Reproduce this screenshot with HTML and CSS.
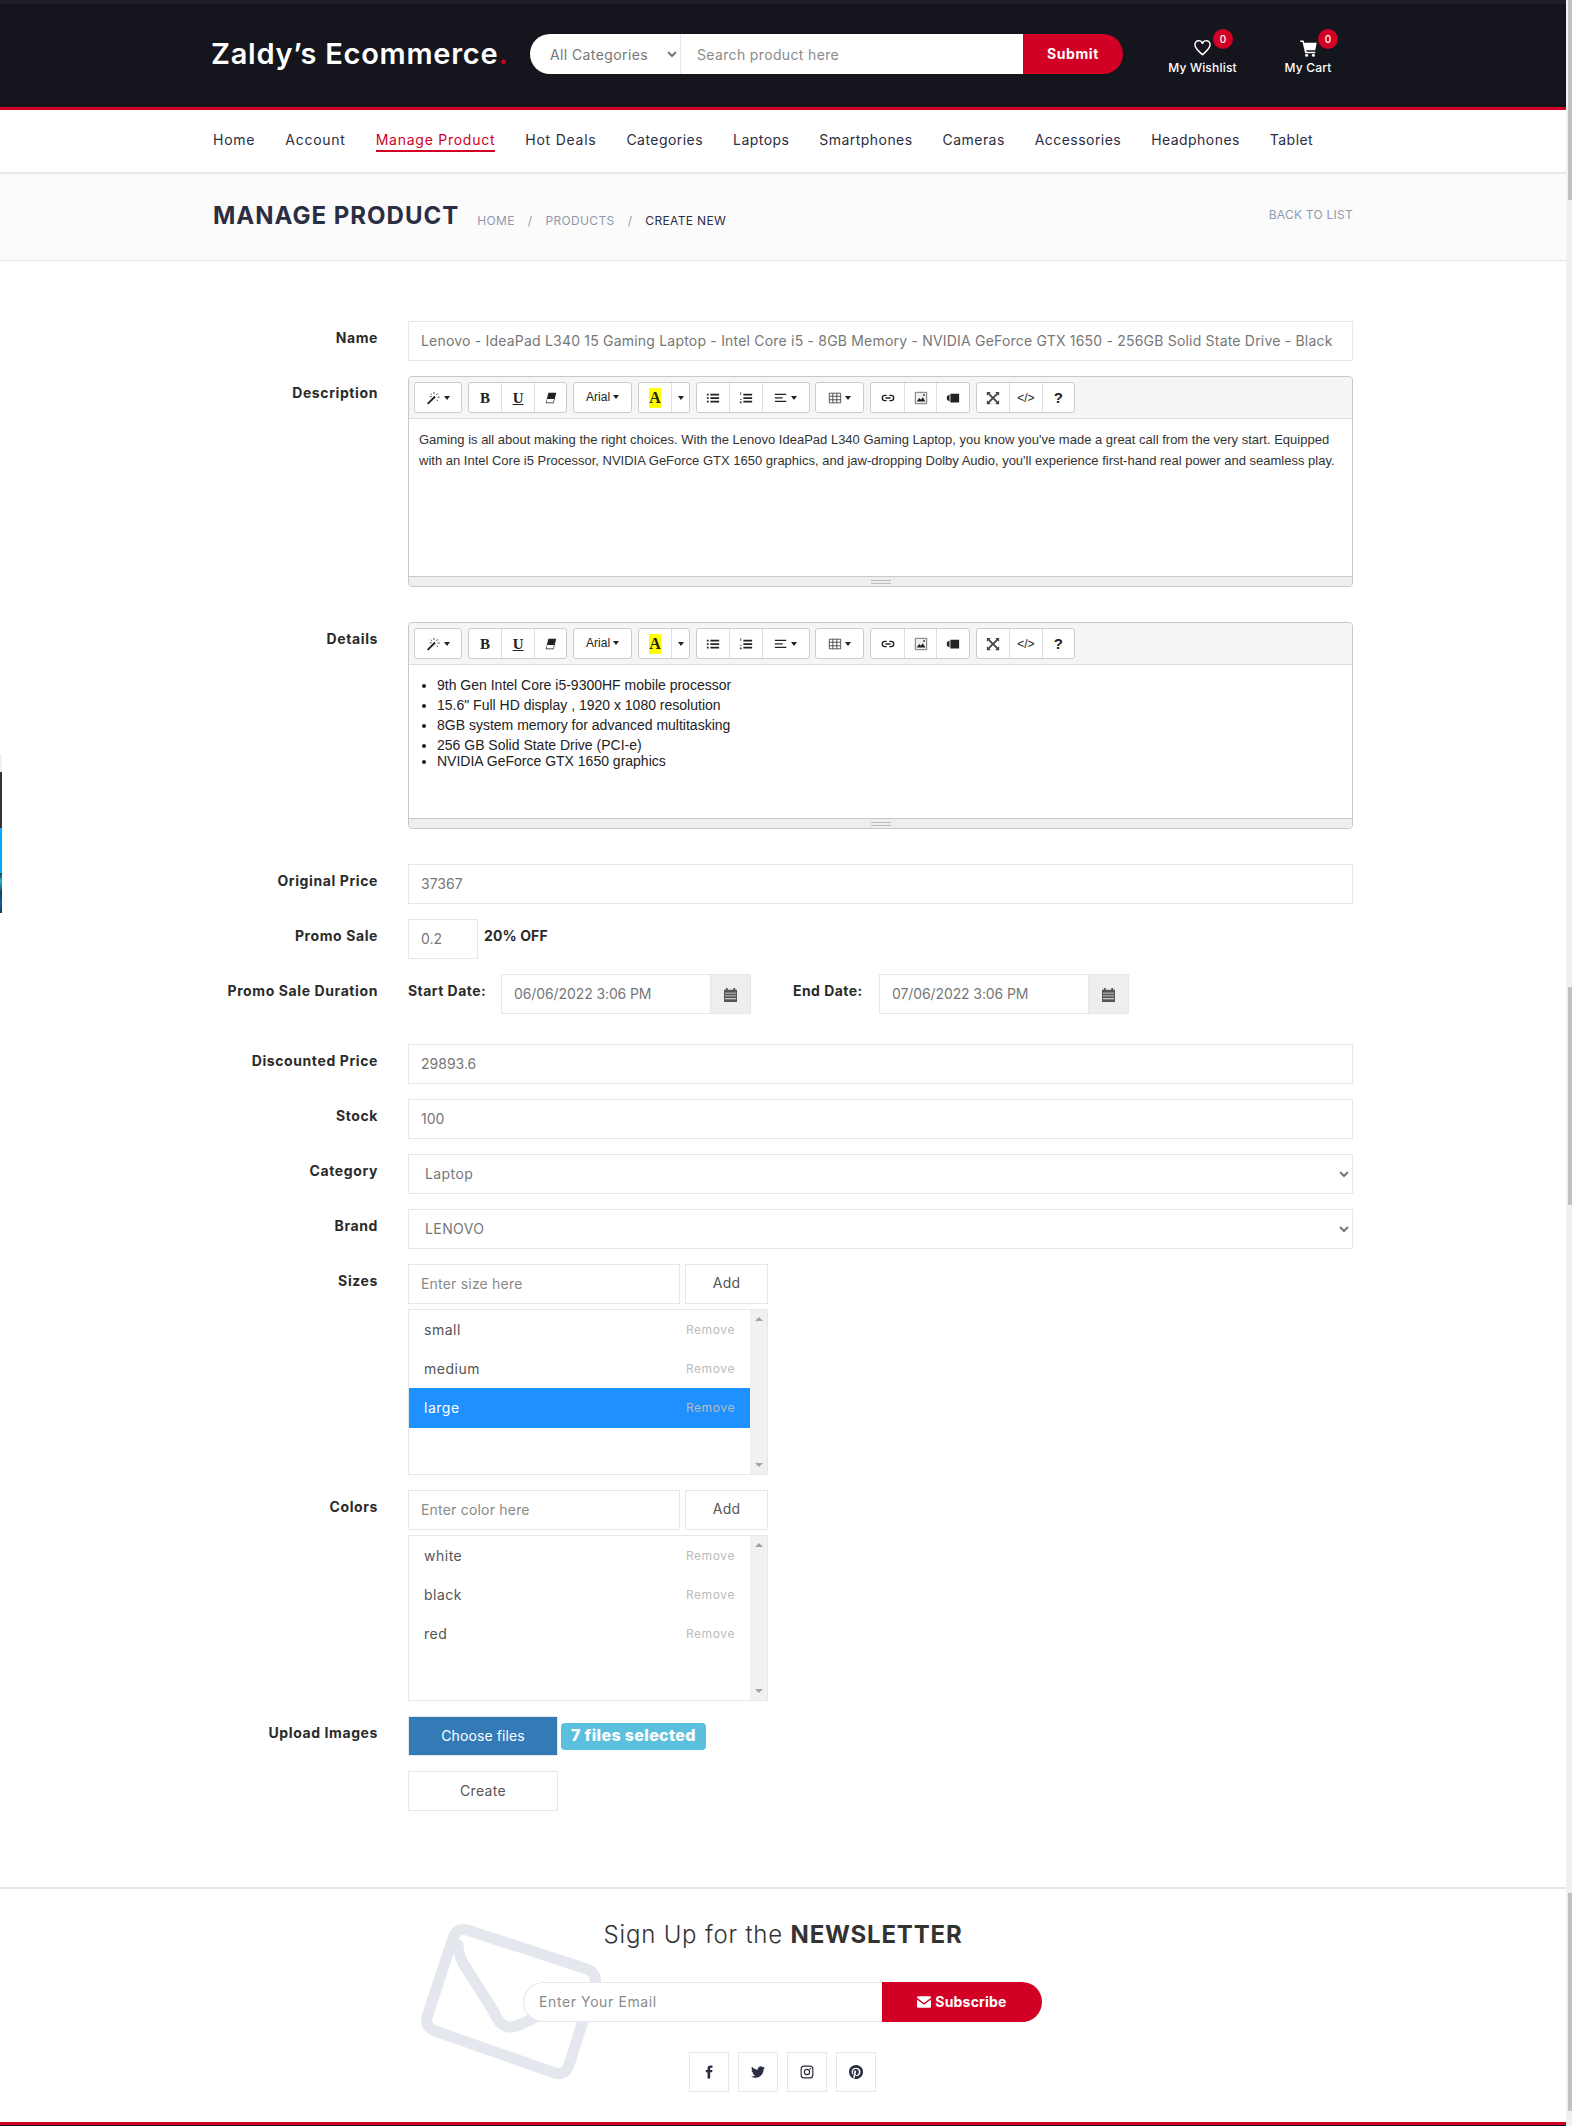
FILE: index.html
```html
<!DOCTYPE html>
<html lang="en">
<head>
<meta charset="utf-8">
<title>Manage Product</title>
<link rel="stylesheet" href="styles.css">
</head>
<body>
<svg class="sprite" aria-hidden="true">
  <symbol id="i-magic" viewBox="0 0 16 16"><path d="M1.500 15.500L0 14l8.500-8.500L10 7z" fill="#222"/><path d="M8 3.500V1M12 7h2.500M10.500 4.500l2-2M5.500 4.500l-1.500-1.500M11 10l1.500 1.500M5.500 6.500H3" stroke="#444" stroke-width="1"/></symbol>
  <symbol id="i-eraser" viewBox="0 0 16 16"><path d="M5 2h9l-3 12H2z" fill="#222"/><path d="M3.500 9h8l-1 4H3z" fill="#fff"/></symbol>
  <symbol id="i-ul" viewBox="0 0 16 16"><path d="M1 3h2v2H1zM1 7h2v2H1zM1 11h2v2H1zM5 3h10v2H5zM5 7h10v2H5zM5 11h10v2H5z" fill="#222"/></symbol>
  <symbol id="i-ol" viewBox="0 0 16 16"><path d="M5 3h10v2H5zM5 7h10v2H5zM5 11h10v2H5z" fill="#222"/><path d="M1.500 1.500h1v3h-1zM1 9h2v1H1zM1 12h2v2H1z" fill="#444"/></symbol>
  <symbol id="i-align" viewBox="0 0 16 16"><path d="M1 3h13v1.500H1zM1 7h9v1.500H1zM1 11h13v1.500H1z" fill="#222"/></symbol>
  <symbol id="i-table" viewBox="0 0 16 16"><path d="M1.500 2.500h13v11h-13zM1.500 6h13M1.500 10h13M5.500 2.500v11M10 2.500v11" fill="none" stroke="#444" stroke-width="1"/></symbol>
  <symbol id="i-link" viewBox="0 0 16 16"><path d="M6.500 5H4.500a3 3 0 0 0 0 6h2M9.500 5h2a3 3 0 0 1 0 6h-2M5 8h6" fill="none" stroke="#222" stroke-width="1.600"/></symbol>
  <symbol id="i-pic" viewBox="0 0 16 16"><path d="M1.500 1.500h13v13h-13z" fill="#eee" stroke="#666"/><path d="M3 12l3-4 2 2 2-3 3 5z" fill="#222"/><circle cx="11.500" cy="4.500" r="1" fill="#222"/></symbol>
  <symbol id="i-video" viewBox="0 0 16 16"><path d="M5 3h10v10H5zM1 6l3-2v8L1 10z" fill="#222"/></symbol>
  <symbol id="i-expand" viewBox="0 0 16 16"><path d="M1 1h4.500L4 2.500 8 6.500l4-4L10.500 1H15v4.500L13.500 4l-4 4 4 4L15 10.500V15h-4.500l1.500-1.500-4-4-4 4L5.500 15H1v-4.500L2.500 12l4-4-4-4L1 5.500z" fill="#444"/></symbol>
  <symbol id="i-cal" viewBox="0 0 14 16"><path d="M0 3h2V1h2v2h6V1h2v2h2v13H0z" fill="#555"/><path d="M1 6h12v1H1zM1 9h12v1H1zM1 12h12v1H1z" fill="#eee"/></symbol>
</svg>

<header class="top">
  <div class="container top-inner">
    <a class="logo">Zaldy’s Ecommerce<span class="logo-dot">.</span></a>
    <form class="search">
      <select class="search-cat"><option>All Categories</option></select>
      <input class="search-input" placeholder="Search product here">
      <button class="search-btn" type="button">Submit</button>
    </form>
    <div class="top-actions">
      <a class="action action-wish">
        <svg class="action-icon" viewBox="0 0 24 24"><path d="M12 21C6 15.500 2 12.500 2 8a5 5 0 0 1 10-1.500A5 5 0 0 1 22 8c0 4.500-4 7.500-10 13z" fill="none" stroke="#fff" stroke-width="2"/></svg>
        <span>My Wishlist</span><b class="badge">0</b>
      </a>
      <a class="action action-cart">
        <svg class="action-icon" viewBox="0 0 24 24"><path d="M1 2h4.500l.7 3H23l-2 10H9l.4 2H21v2H7.500L4 4H1z" fill="#fff"/><circle cx="9.500" cy="21.500" r="2" fill="#fff"/><circle cx="18.500" cy="21.500" r="2" fill="#fff"/></svg>
        <span>My Cart</span><b class="badge">0</b>
      </a>
    </div>
  </div>
</header>

<nav class="nav">
  <div class="container nav-inner">
    <a>Home</a><a>Account</a><a class="active">Manage Product</a><a>Hot Deals</a><a>Categories</a><a>Laptops</a><a>Smartphones</a><a>Cameras</a><a>Accessories</a><a>Headphones</a><a>Tablet</a>
  </div>
</nav>

<section class="crumbs">
  <div class="container crumbs-inner">
    <h1 class="crumbs-title">MANAGE PRODUCT</h1>
    <div class="crumbs-trail"><a>HOME</a><i>/</i><a>PRODUCTS</a><i>/</i><span>CREATE NEW</span></div>
    <a class="back">BACK TO LIST</a>
  </div>
</section>

<main class="container form">
  <div class="row"><label>Name</label><div class="field"><input class="ctl ctl-name" value="Lenovo - IdeaPad L340 15 Gaming Laptop - Intel Core i5 - 8GB Memory - NVIDIA GeForce GTX 1650 - 256GB Solid State Drive - Black"></div></div>

  <div class="row row-editor"><label>Description</label><div class="field">
    <div class="editor">
      <div class="toolbar">
        <div class="tg"><span class="tb w46"><svg class="ti"><use href="#i-magic"/></svg><u class="car"></u></span></div>
        <div class="tg"><span class="tb tb-b">B</span><span class="tb tb-u">U</span><span class="tb"><svg class="ti"><use href="#i-eraser"/></svg></span></div>
        <div class="tg"><span class="tb w57 tb-font">Arial<u class="car"></u></span></div>
        <div class="tg"><span class="tb"><span class="tb-a">A</span></span><span class="tb w18"><u class="car"></u></span></div>
        <div class="tg"><span class="tb"><svg class="ti"><use href="#i-ul"/></svg></span><span class="tb"><svg class="ti"><use href="#i-ol"/></svg></span><span class="tb w47"><svg class="ti"><use href="#i-align"/></svg><u class="car"></u></span></div>
        <div class="tg"><span class="tb w47"><svg class="ti"><use href="#i-table"/></svg><u class="car"></u></span></div>
        <div class="tg"><span class="tb"><svg class="ti"><use href="#i-link"/></svg></span><span class="tb"><svg class="ti"><use href="#i-pic"/></svg></span><span class="tb"><svg class="ti"><use href="#i-video"/></svg></span></div>
        <div class="tg"><span class="tb"><svg class="ti"><use href="#i-expand"/></svg></span><span class="tb tb-code">&lt;/&gt;</span><span class="tb tb-q">?</span></div>
      </div>
      <div class="edit-body edit-desc">Gaming is all about making the right choices. With the Lenovo IdeaPad L340 Gaming Laptop, you know you've made a great call from the very start. Equipped with an Intel Core i5 Processor, NVIDIA GeForce GTX 1650 graphics, and jaw-dropping Dolby Audio, you'll experience first-hand real power and seamless play.</div>
      <div class="status"><i></i></div>
    </div>
  </div></div>

  <div class="row row-editor"><label>Details</label><div class="field">
    <div class="editor">
      <div class="toolbar">
        <div class="tg"><span class="tb w46"><svg class="ti"><use href="#i-magic"/></svg><u class="car"></u></span></div>
        <div class="tg"><span class="tb tb-b">B</span><span class="tb tb-u">U</span><span class="tb"><svg class="ti"><use href="#i-eraser"/></svg></span></div>
        <div class="tg"><span class="tb w57 tb-font">Arial<u class="car"></u></span></div>
        <div class="tg"><span class="tb"><span class="tb-a">A</span></span><span class="tb w18"><u class="car"></u></span></div>
        <div class="tg"><span class="tb"><svg class="ti"><use href="#i-ul"/></svg></span><span class="tb"><svg class="ti"><use href="#i-ol"/></svg></span><span class="tb w47"><svg class="ti"><use href="#i-align"/></svg><u class="car"></u></span></div>
        <div class="tg"><span class="tb w47"><svg class="ti"><use href="#i-table"/></svg><u class="car"></u></span></div>
        <div class="tg"><span class="tb"><svg class="ti"><use href="#i-link"/></svg></span><span class="tb"><svg class="ti"><use href="#i-pic"/></svg></span><span class="tb"><svg class="ti"><use href="#i-video"/></svg></span></div>
        <div class="tg"><span class="tb"><svg class="ti"><use href="#i-expand"/></svg></span><span class="tb tb-code">&lt;/&gt;</span><span class="tb tb-q">?</span></div>
      </div>
      <div class="edit-body edit-list">
        <ul>
          <li>9th Gen Intel Core i5-9300HF mobile processor</li>
          <li>15.6" Full HD display , 1920 x 1080 resolution</li>
          <li>8GB system memory for advanced multitasking</li>
          <li>256 GB Solid State Drive (PCI-e)</li>
          <li class="tight">NVIDIA GeForce GTX 1650 graphics</li>
        </ul>
      </div>
      <div class="status"><i></i></div>
    </div>
  </div></div>

  <div class="row"><label>Original Price</label><div class="field"><input class="ctl" value="37367"></div></div>
  <div class="row"><label>Promo Sale</label><div class="field field-inline"><input class="ctl ctl-promo" value="0.2"><b class="off">20% OFF</b></div></div>
  <div class="row row-gap"><label>Promo Sale Duration</label><div class="field field-dates">
    <b class="date-label">Start Date:</b>
    <div class="date"><input class="ctl" value="06/06/2022 3:06 PM"><span class="addon"><svg class="cal"><use href="#i-cal"/></svg></span></div>
    <b class="date-label date-end">End Date:</b>
    <div class="date"><input class="ctl" value="07/06/2022 3:06 PM"><span class="addon"><svg class="cal"><use href="#i-cal"/></svg></span></div>
  </div></div>
  <div class="row"><label>Discounted Price</label><div class="field"><input class="ctl" value="29893.6"></div></div>
  <div class="row"><label>Stock</label><div class="field"><input class="ctl" value="100"></div></div>
  <div class="row"><label>Category</label><div class="field"><select class="ctl ctl-sel"><option>Laptop</option></select></div></div>
  <div class="row"><label>Brand</label><div class="field"><select class="ctl ctl-sel"><option>LENOVO</option></select></div></div>

  <div class="row"><label>Sizes</label><div class="field field-list">
    <div class="adder"><input class="ctl ctl-name" placeholder="Enter size here"><button class="btn-add" type="button">Add</button></div>
    <div class="listbox">
      <ul class="opts">
        <li><span>small</span><a>Remove</a></li>
        <li><span>medium</span><a>Remove</a></li>
        <li class="sel"><span>large</span><a>Remove</a></li>
      </ul>
      <div class="lb-scroll"><u class="up"></u><u class="down"></u></div>
    </div>
  </div></div>

  <div class="row"><label>Colors</label><div class="field field-list">
    <div class="adder"><input class="ctl ctl-name" placeholder="Enter color here"><button class="btn-add" type="button">Add</button></div>
    <div class="listbox">
      <ul class="opts">
        <li><span>white</span><a>Remove</a></li>
        <li><span>black</span><a>Remove</a></li>
        <li><span>red</span><a>Remove</a></li>
      </ul>
      <div class="lb-scroll"><u class="up"></u><u class="down"></u></div>
    </div>
  </div></div>

  <div class="row"><label>Upload Images</label><div class="field field-upload"><span class="choose">Choose files</span><b class="files">7 files selected</b></div></div>
  <div class="row"><label></label><div class="field"><button class="create" type="button">Create</button></div></div>
</main>

<footer class="news">
  <svg class="news-env" viewBox="0 0 182 158"><g fill="none" stroke="#e4e7ed" stroke-width="11" stroke-linejoin="round" stroke-linecap="round"><path d="M46 7 166 46Q176 50 174 60L148 142Q144 153 134 150L14 108Q4 104 6 94L32 15Q36 4 46 7z"/><path d="M37 22Q37 30 42 40L73 89Q80 108 96 103L113 95"/></g></svg>
  <h2 class="news-title">Sign Up for the <b>NEWSLETTER</b></h2>
  <form class="news-form">
    <input class="news-input" placeholder="Enter Your Email">
    <button class="news-btn" type="button"><svg class="news-mail" viewBox="0 0 16 13"><path d="M0 1.500A1.500 1.500 0 0 1 1.500 0h13A1.500 1.500 0 0 1 16 1.500L8 7.500zM0 3.500V11.500A1.500 1.500 0 0 0 1.500 13h13a1.500 1.500 0 0 0 1.500-1.500V3.500L8 9.500z" fill="#fff"/></svg>Subscribe</button>
  </form>
  <div class="socials">
    <a class="soc"><svg viewBox="0 0 24 24"><path d="M14 8.500V6.300c0-1 .3-1.600 1.700-1.600H18V1h-3.200C11 1 9.500 3.200 9.500 6v2.500h-3v4h3V23H14V12.500h3.300l.5-4z" fill="#2b2d42"/></svg></a>
    <a class="soc"><svg viewBox="0 0 24 24"><path d="M23.950 4.570a10 10 0 0 1-2.820.77 4.960 4.960 0 0 0 2.160-2.720c-.95.55-2 .96-3.120 1.190a4.920 4.920 0 0 0-8.380 4.480C7.690 8.090 4.070 6.130 1.640 3.160a4.820 4.820 0 0 0-.67 2.480c0 1.700.87 3.210 2.180 4.100a4.900 4.900 0 0 1-2.230-.61v.06c0 2.390 1.700 4.380 3.950 4.830a5 5 0 0 1-2.210.08 4.940 4.940 0 0 0 4.600 3.420A9.870 9.870 0 0 1 0 19.540a14 14 0 0 0 7.560 2.210c9.050 0 14-7.500 14-13.980 0-.21 0-.42-.02-.63a9.940 9.940 0 0 0 2.410-2.570z" fill="#2b2d42"/></svg></a>
    <a class="soc"><svg viewBox="0 0 24 24"><rect x="2" y="2" width="20" height="20" rx="5" fill="none" stroke="#2b2d42" stroke-width="2"/><circle cx="12" cy="12" r="4.500" fill="none" stroke="#2b2d42" stroke-width="2"/><circle cx="17.500" cy="6.500" r="1.300" fill="#2b2d42"/></svg></a>
    <a class="soc"><svg viewBox="0 0 24 24"><path d="M12 0C5.400 0 0 5.400 0 12c0 5 3.100 9.400 7.600 11.200-.1-.9-.2-2.400 0-3.400.2-.9 1.400-5.800 1.400-5.800s-.4-.7-.4-1.800c0-1.700 1-2.900 2.200-2.900 1 0 1.500.8 1.500 1.700 0 1-.7 2.600-1 4-.3 1.200.6 2.200 1.800 2.200 2.100 0 3.800-2.200 3.800-5.500 0-2.900-2.100-4.900-5-4.900-3.400 0-5.400 2.600-5.400 5.200 0 1 .4 2.100.9 2.700.1.100.1.200.1.300l-.3 1.400c-.1.200-.2.300-.4.200-1.500-.7-2.400-2.900-2.400-4.600 0-3.800 2.800-7.300 7.900-7.300 4.200 0 7.400 3 7.400 6.900 0 4.100-2.600 7.500-6.200 7.500-1.200 0-2.300-.6-2.700-1.400l-.7 2.800c-.3 1-1 2.300-1.500 3.100 1.100.4 2.300.5 3.600.5 6.600 0 12-5.400 12-12S18.600 0 12 0z" fill="#2b2d42"/></svg></a>
  </div>
</footer>
<div class="footbar"></div>

<div class="sb" aria-hidden="true"><i class="thumb t1"></i><i class="thumb t2"></i><i class="thumb t3"></i></div>
<div class="edge" aria-hidden="true"><i class="e1"></i><i class="e2"></i><i class="e3"></i><i class="e4"></i></div>
</body>
</html>
```
FILE: styles.css
```css
* { box-sizing: border-box; }
html, body { margin: 0; padding: 0; }
body {
  position: relative;
  width: 1572px;
  height: 2126px;
  overflow: hidden;
  background: #fff;
  color: #333;
  font: 400 14px/20px Inter, "Open Sans", sans-serif;
}
.sprite { display: none; }
ul { margin: 0; padding: 0; list-style: none; }
input, select, button { font: inherit; margin: 0; outline: 0; border-radius: 0; }
.container { width: 1140px; margin-left: 213px; }

/* header */
.top { width: 1566px; height: 110px; background: #15161d; border-top: 4px solid #1e1f29; border-bottom: 3px solid #d10024; }
.top-inner { display: flex; align-items: flex-start; padding-top: 30px; margin-left: 211px; }
.logo { width: 319px; color: #fff; font-size: 29px; font-weight: 600; letter-spacing: .75px; line-height: 40px; white-space: nowrap; }
.logo-dot { color: #d10024; }
.search { display: flex; width: 593px; height: 40px; }
.search-cat { width: 151px; height: 40px; padding-left: 16px; border: 0; border-right: 1px solid #e4e7ed; border-radius: 20px 0 0 20px; background: #fff; color: #777; letter-spacing: .4px; }
.search-input { width: 342px; height: 40px; padding: 0 15px 0 16px; border: 0; background: #fff; color: #777; letter-spacing: .35px; }
.search-input::placeholder, .ctl::placeholder, .news-input::placeholder { color: #8a8a8a; opacity: 1; }
.search-btn { width: 100px; height: 40px; padding: 0; border: 0; border-radius: 0 20px 20px 0; background: #d10024; color: #fff; font-weight: 700; letter-spacing: .6px; }
.top-actions { display: flex; margin-left: 45px; }
.action { position: relative; display: flex; flex-direction: column; align-items: center; color: #fff; font-size: 12px; font-weight: 500; letter-spacing: .2px; line-height: 16px; white-space: nowrap; }
.action-wish { width: 69px; }
.action-cart { width: 46px; margin-left: 48px; }
.action-icon { width: 19px; height: 18px; margin-top: 5px; margin-bottom: 3px; }
.badge { position: absolute; top: -5px; left: 45px; width: 20px; height: 20px; border-radius: 50%; background: #d10024; color: #fff; font-size: 10px; font-weight: 500; line-height: 20px; text-align: center; }
.action-cart .badge { left: 33px; }

/* nav */
.nav { width: 1566px; height: 64px; border-bottom: 2px solid #e4e7ed; }
.nav-inner { display: flex; gap: 30px; height: 62px; padding-top: 20px; color: #2b2d42; font-weight: 400; letter-spacing: .45px; }
.nav-inner a { height: 22px; white-space: nowrap; }
.nav-inner a:nth-child(-n+4) { letter-spacing: .75px; }
.nav-inner .active { color: #d10024; border-bottom: 2px solid #d10024; }

/* breadcrumb */
.crumbs { width: 1566px; height: 87px; background: #fbfbfb; border-bottom: 1px solid #e4e7ed; }
.crumbs-inner { display: flex; align-items: flex-start; height: 86px; }
.crumbs-title { margin: 27px 0 0; color: #2b2d42; font-size: 24px; font-weight: 700; letter-spacing: 1px; line-height: 30px; white-space: nowrap; }
.crumbs-trail { display: flex; margin: 38px 0 0 18px; color: #8d99ae; font-size: 12px; letter-spacing: .35px; line-height: 18px; }
.crumbs-trail i { margin: 0 13px; font-style: normal; }
.crumbs-trail span { color: #2b2d42; }
.back { margin: 32px 0 0 auto; color: #8d99ae; font-size: 12px; letter-spacing: .25px; line-height: 18px; }

/* form */
.form { padding-top: 60px; }
.row { display: flex; margin-bottom: 15px; }
.row label { flex: none; width: 165px; padding-top: 7px; color: #2b2b2b; font-weight: 700; letter-spacing: .6px; text-align: right; white-space: nowrap; }
.field { flex: none; width: 945px; margin-left: 30px; }
.row-editor { margin-bottom: 35px; }
.row-gap { margin-bottom: 30px; }
.ctl { display: block; width: 100%; height: 40px; padding: 0 12px 2px; border: 1px solid #e4e7ed; background: #fff; color: #777; white-space: nowrap; }
.ctl-name { letter-spacing: .2px; }
.ctl-sel { padding-left: 12px; letter-spacing: .4px; }

.editor { border: 1px solid #c8c8c8; border-radius: 4px; }
.toolbar { display: flex; gap: 5.800px; height: 42px; padding: 5px 0 0 5px; background: #f5f5f5; border-bottom: 1px solid #ddd; border-radius: 4px 4px 0 0; }
.tg { display: flex; height: 31px; border: 1px solid #ccc; border-radius: 3px; background: #fff; }
.tb { display: flex; align-items: center; justify-content: center; gap: 3px; width: 32.500px; border-left: 1px solid #ddd; color: #222; font-family: "Liberation Sans", sans-serif; font-size: 12px; }
.tb:first-child { border-left: 0; }
.w46 { width: 46px; }
.w47 { width: 47px; }
.w57 { width: 57px; }
.w18 { width: 17.500px; }
.ti { width: 14px; height: 14px; }
.car { display: block; width: 0; height: 0; border: 3.500px solid transparent; border-top: 4px solid #222; border-bottom: 0; }
.tb-b, .tb-u { font-family: "Liberation Serif", serif; font-size: 15px; font-weight: 700; }
.tb-u { text-decoration: underline; }
.tb-font { padding-bottom: 1px; }
.tb-a { width: 12px; background: #ff0; font-family: "Liberation Serif", serif; font-size: 16px; font-weight: 700; line-height: 20px; text-align: center; }
.tb-code { font-size: 12px; }
.tb-q { font-size: 15px; font-weight: 700; }
.edit-body { padding: 10px; color: #333; font-family: "Liberation Sans", sans-serif; font-size: 14px; line-height: 21px; }
.edit-desc { height: 157px; font-size: 13px; }
.edit-list { height: 153px; padding-top: 10px; color: #222; }
.edit-list ul { padding-left: 18px; list-style: disc; }
.edit-list li { line-height: 20px; }
.edit-list li.tight { margin-top: -4px; }
.status { display: flex; justify-content: center; align-items: center; height: 10px; background: #eee; border-top: 1px solid #c8c8c8; border-radius: 0 0 4px 4px; }
.status i { display: block; width: 20px; height: 4px; border-top: 1px solid #bbb; border-bottom: 1px solid #bbb; }

.field-inline { display: flex; align-items: flex-start; }
.ctl-promo { width: 70px; }
.off { margin: 7px 0 0 6px; color: #2b2b2b; letter-spacing: .1px; }
.field-dates { display: flex; align-items: flex-start; }
.date-label { padding-top: 7px; width: 93px; color: #2b2b2b; letter-spacing: .45px; white-space: nowrap; }
.date-end { width: 86px; margin-left: 42px; }
.date { display: flex; width: 250px; }
.date .ctl { width: 210px; letter-spacing: -.1px; }
.addon { display: flex; align-items: center; justify-content: center; width: 40px; height: 40px; background: #eee; border: 1px solid #e4e7ed; border-left: 0; }
.cal { width: 13px; height: 15px; }

.adder { display: flex; gap: 5px; width: 360px; }
.adder .ctl { width: 272px; }
.btn-add { width: 83px; height: 40px; padding: 0 0 2px; border: 1px solid #e4e7ed; background: #fff; color: #555; letter-spacing: .2px; }
.listbox { display: flex; justify-content: space-between; width: 360px; height: 166px; margin-top: 5px; border: 1px solid #e4e7ed; }
.opts { flex: none; width: 341px; padding-top: 0; }
.opts li { display: flex; justify-content: space-between; align-items: center; height: 39px; padding: 0 15px; color: #555; letter-spacing: .5px; }
.opts a { color: #bbb; font-size: 12px; letter-spacing: .6px; }
.opts li.sel { height: 40px; background: #1e90ff; color: #fff; }
.lb-scroll { display: flex; flex-direction: column; justify-content: space-between; align-items: center; flex: none; width: 17px; padding: 7px 0; background: #f1f1f1; }
.up, .down { display: block; width: 0; height: 0; border: 4px solid transparent; }
.up { border-top: 0; border-bottom: 4px solid #a3a3a3; }
.down { border-bottom: 0; border-top: 4px solid #a3a3a3; }

.field-upload { display: flex; align-items: center; }
.choose { display: flex; align-items: center; justify-content: center; width: 150px; height: 40px; background: #337ab7; border: 1px solid #e4e7ed; color: #fff; letter-spacing: .1px; }
.files { margin-left: 3px; padding: 0 10px; height: 27px; background: #5bc0de; border-radius: 4px; color: #fff; font-size: 16px; font-weight: 800; letter-spacing: .35px; line-height: 25px; white-space: nowrap; }
.create { display: block; width: 150px; height: 40px; padding: 0; border: 1px solid #e4e7ed; background: #fff; color: #555; letter-spacing: .3px; }
.form > .row:last-child { margin-bottom: 0; height: 116px; }

/* newsletter */
.news { position: relative; width: 1566px; height: 235px; border-top: 2px solid #e4e7ed; }
.news-env { position: absolute; left: 421px; top: 34px; width: 182px; height: 158px; }
.news-title { position: relative; width: 1566px; margin: 0; padding-top: 31px; color: #333; font-size: 24px; font-weight: 300; letter-spacing: .8px; line-height: 30px; text-align: center; }
.news-title b { font-weight: 700; }
.news-form { position: relative; display: flex; width: 519px; height: 40px; margin: 32px 0 0 523px; }
.news-input { width: 359px; height: 40px; padding: 0 15px 1px; border: 1px solid #e4e7ed; border-right: 0; border-radius: 20px 0 0 20px; background: #fff; color: #777; letter-spacing: .6px; }
.news-btn { display: flex; align-items: center; justify-content: center; gap: 4px; width: 160px; height: 40px; padding: 0; border: 0; border-radius: 0 20px 20px 0; background: #d10024; color: #fff; font-weight: 700; letter-spacing: .2px; }
.news-mail { width: 14px; height: 12px; }
.socials { position: relative; display: flex; gap: 9px; margin: 30px 0 0 689px; }
.soc { display: flex; align-items: center; justify-content: center; width: 40px; height: 40px; border: 1px solid #e4e7ed; }
.soc svg { width: 14px; height: 14px; }
.footbar { width: 1566px; height: 4px; background: #d10024; border-bottom: 1px solid #15161d; }

/* stitched-capture artefacts */
.sb { position: absolute; top: 0; right: 0; width: 6px; height: 2126px; background: #f1f1f1; }
.thumb { position: absolute; left: 2px; width: 4px; background: #c1c1c1; }
.t1 { top: 0; height: 200px; }
.t2 { top: 987px; height: 218px; }
.t3 { top: 1893px; height: 218px; }
.edge { position: absolute; left: 0; top: 754px; width: 2px; display: flex; flex-direction: column; }
.edge i { display: block; }
.e1 { height: 18px; background: #f1f1f1; }
.e2 { height: 56px; background: #333; }
.e3 { height: 45px; background: #00b0ff; }
.e4 { height: 40px; background: linear-gradient(#1d3a4a, #23b5c9 20%, #12405a 50%, #0c5fb0 75%, #1d3a4a); }
```
